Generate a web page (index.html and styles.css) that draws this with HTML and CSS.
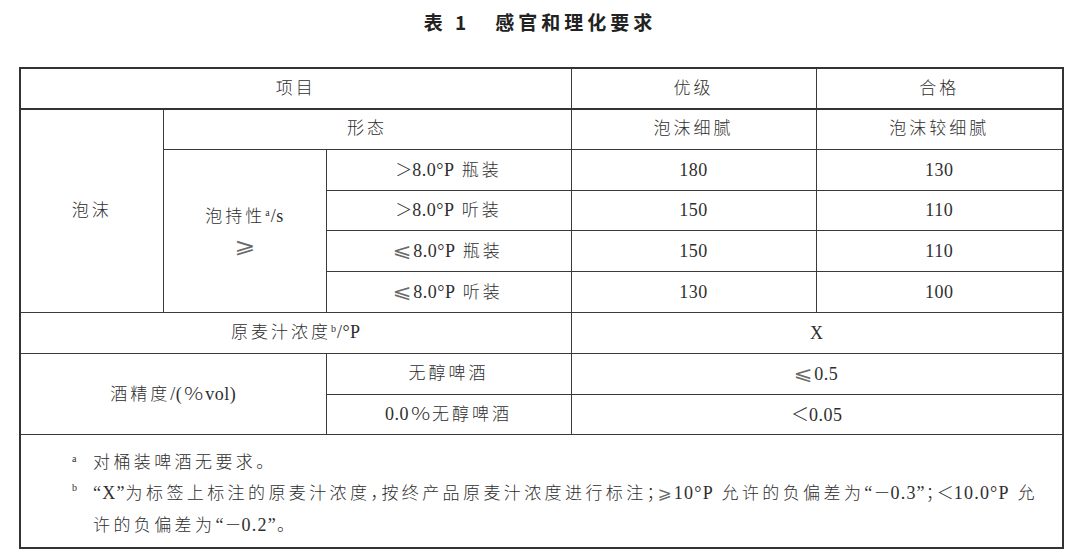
FILE: index.html
```html
<!DOCTYPE html>
<html lang="zh">
<head>
<meta charset="utf-8">
<title>表 1 感官和理化要求</title>
<link rel="stylesheet" href="styles.css">
</head>
<body>
<div class="title">表&nbsp;1&nbsp;&nbsp;&nbsp;感官和理化要求</div>
<table class="spec">
  <colgroup>
    <col class="c1"><col class="c2"><col class="c3"><col class="c4"><col class="c5">
  </colgroup>
  <tr class="r41">
    <td colspan="3">项目</td>
    <td>优级</td>
    <td>合格</td>
  </tr>
  <tr class="r40">
    <td rowspan="5" class="lead">泡沫</td>
    <td colspan="2">形态</td>
    <td>泡沫细腻</td>
    <td>泡沫较细腻</td>
  </tr>
  <tr class="r41">
    <td rowspan="4" class="two-line"><span class="l1">泡持性<sup>a</sup><span class="lat">/s</span></span><span class="l2 sym">⩾</span></td>
    <td class="mix"><span class="fw">＞</span><span class="lat">8.0°P</span> 瓶装</td>
    <td class="num">180</td>
    <td class="num">130</td>
  </tr>
  <tr class="r40">
    <td class="mix"><span class="fw">＞</span><span class="lat">8.0°P</span> 听装</td>
    <td class="num">150</td>
    <td class="num">110</td>
  </tr>
  <tr class="r41">
    <td class="mix"><span class="sym">⩽</span><span class="lat">8.0°P</span> 瓶装</td>
    <td class="num">150</td>
    <td class="num">110</td>
  </tr>
  <tr class="r41">
    <td class="mix"><span class="sym">⩽</span><span class="lat">8.0°P</span> 听装</td>
    <td class="num">130</td>
    <td class="num">100</td>
  </tr>
  <tr class="r41 strong-top">
    <td colspan="3">原麦汁浓度<sup>b</sup><span class="lat">/°P</span></td>
    <td colspan="2" class="num">X</td>
  </tr>
  <tr class="r41">
    <td colspan="2" rowspan="2">酒精度<span class="lat">/(</span><span class="fw pct">％</span><span class="lat">vol)</span></td>
    <td>无醇啤酒</td>
    <td colspan="2" class="num"><span class="sym">⩽</span>0.5</td>
  </tr>
  <tr class="r40">
    <td><span class="lat">0.0</span><span class="fw pct">％</span>无醇啤酒</td>
    <td colspan="2" class="num"><span class="fw">＜</span>0.05</td>
  </tr>
  <tr class="foot">
    <td colspan="5">
      <div class="fn">
        <div class="note">
          <span class="mark">a</span>
          <span class="ntext">对桶装啤酒无要求。</span>
        </div>
        <div class="note">
          <span class="mark">b</span>
          <span class="ntext"><span class="lat">“X”</span>为标签上标注的原麦汁浓度<span class="pn">，</span>按终产品原麦汁浓度进行标注<span class="pn">；</span><span class="fsym">⩾</span><span class="lat">10°P</span> 允许的负偏差为<span class="lat">“</span><span class="fw">－</span><span class="lat">0.3”</span><span class="pn">；</span><span class="fw">＜</span><span class="lat">10.0°P</span> 允许的负偏差为<span class="lat">“</span><span class="fw">－</span><span class="lat">0.2”</span>。</span>
        </div>
      </div>
    </td>
  </tr>
</table>
</body>
</html>
```

FILE: styles.css
```css
html, body {
  margin: 0;
  padding: 0;
  background: #ffffff;
}

body {
  width: 1080px;
  height: 559px;
  overflow: hidden;
  color: #2e2e2e;
  font-family: "Liberation Serif", "Noto Sans CJK SC", "DejaVu Sans", serif;
}

.title {
  padding-top: 10px;
  height: 24px;
  line-height: 24px;
  margin-bottom: 33px;
  text-align: center;
  font-family: "Noto Sans CJK SC", sans-serif;
  font-weight: 700;
  font-size: 19px;
  letter-spacing: 4px;
  color: #222;
}

.spec {
  margin-left: 19px;
  width: 1043px;
  table-layout: fixed;
  border-collapse: collapse;
  border: 2px solid #333;
}

.c1 { width: 143px; }
.c2 { width: 163px; }
.c3 { width: 245px; }
.c4 { width: 245px; }
.c5 { width: 247px; }

.spec td {
  border: 1px solid #3a3a3a;
  padding: 0;
  text-align: center;
  vertical-align: middle;
  font-size: 17px;
  letter-spacing: 3px;
  font-weight: 300;
  line-height: 20px;
}

.r41 { height: 41px; }
.r40 { height: 40px; }

.spec tr:first-child td {
  border-bottom: 2px solid #333;
}

.strong-top td {
  border-top: 1.5px solid #333;
}

.lat {
  font-family: "Liberation Serif", serif;
  font-size: 18px;
  letter-spacing: 0.5px;
  font-weight: 400;
}

.spec td.num {
  font-family: "Liberation Serif", serif;
  font-size: 18px;
  letter-spacing: 0.5px;
  font-weight: 400;
}

.fw {
  font-family: "Noto Sans CJK SC", sans-serif;
  font-weight: 300;
  letter-spacing: 0;
}

.pct {
  display: inline-block;
  transform: scaleX(1.25);
  margin: 0 3px;
}

.sym {
  display: inline-block;
  font-family: "DejaVu Sans", sans-serif;
  font-weight: 400;
  letter-spacing: 0;
  font-size: 19px;
  color: #6a6a6a;
  transform: scaleX(1.2);
  margin-right: 3px;
}

sup {
  font-family: "Liberation Serif", serif;
  font-size: 10px;
  letter-spacing: 1px;
  vertical-align: 6px;
  line-height: 0;
}

.two-line .l1,
.two-line .l2 {
  display: block;
}

.two-line .l2 {
  margin: 9px auto 0;
  width: 20px;
  font-size: 21px;
}

.lead {
  padding-bottom: 4px;
}

.spec .foot td {
  vertical-align: top;
  text-align: left;
  padding: 0;
  line-height: 29.5px;
  letter-spacing: 3.4px;
}

.fn {
  height: 112px;
  box-sizing: border-box;
  padding: 13px 12px 0 51px;
  overflow: hidden;
}

.foot .lat {
  letter-spacing: 1.2px;
}

.fsym {
  font-family: "DejaVu Sans", sans-serif;
  font-weight: 400;
  letter-spacing: 2px;
  font-size: 17px;
  color: #6a6a6a;
}

.note {
  display: flex;
}

.mark {
  flex: 0 0 21px;
  font-family: "Liberation Serif", serif;
  font-size: 10px;
  line-height: 22px;
  letter-spacing: 0;
}

.ntext {
  flex: 1 1 auto;
}

.pn {
  letter-spacing: -6px;
}
```
